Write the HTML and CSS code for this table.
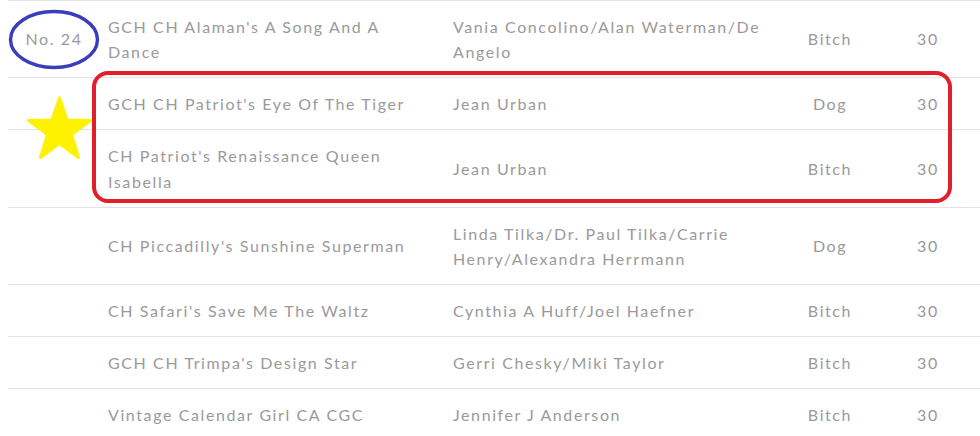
FILE: index.html
```html
<!DOCTYPE html>
<html>
<head>
<meta charset="utf-8">
<link rel="stylesheet" href="styles.css">
</head>
<body>
<div class="page">
  <div class="table">
    <div class="row">
      <div class="cell rank">No. 24</div>
      <div class="cell name">GCH CH Alaman's A Song And A Dance</div>
      <div class="cell owner">Vania Concolino/Alan Waterman/De Angelo</div>
      <div class="cell sex">Bitch</div>
      <div class="cell pts">30</div>
    </div>
    <div class="row">
      <div class="cell rank"></div>
      <div class="cell name">GCH CH Patriot's Eye Of The Tiger</div>
      <div class="cell owner">Jean Urban</div>
      <div class="cell sex">Dog</div>
      <div class="cell pts">30</div>
    </div>
    <div class="row">
      <div class="cell rank"></div>
      <div class="cell name">CH Patriot's Renaissance Queen Isabella</div>
      <div class="cell owner">Jean Urban</div>
      <div class="cell sex">Bitch</div>
      <div class="cell pts">30</div>
    </div>
    <div class="row">
      <div class="cell rank"></div>
      <div class="cell name">CH Piccadilly's Sunshine Superman</div>
      <div class="cell owner">Linda Tilka/Dr. Paul Tilka/Carrie Henry/Alexandra Herrmann</div>
      <div class="cell sex">Dog</div>
      <div class="cell pts">30</div>
    </div>
    <div class="row">
      <div class="cell rank"></div>
      <div class="cell name">CH Safari's Save Me The Waltz</div>
      <div class="cell owner">Cynthia A Huff/Joel Haefner</div>
      <div class="cell sex">Bitch</div>
      <div class="cell pts">30</div>
    </div>
    <div class="row">
      <div class="cell rank"></div>
      <div class="cell name">GCH CH Trimpa's Design Star</div>
      <div class="cell owner">Gerri Chesky/Miki Taylor</div>
      <div class="cell sex">Bitch</div>
      <div class="cell pts">30</div>
    </div>
    <div class="row">
      <div class="cell rank"></div>
      <div class="cell name">Vintage Calendar Girl CA CGC</div>
      <div class="cell owner">Jennifer J Anderson</div>
      <div class="cell sex">Bitch</div>
      <div class="cell pts">30</div>
    </div>
  </div>
  <svg class="marks" width="980" height="436" viewBox="0 0 980 436" aria-hidden="true">
    <ellipse cx="54" cy="39.5" rx="43.5" ry="28" fill="none" stroke="#3a3eba" stroke-width="3.4"/>
    <polygon points="59.5,98 67,120 90.5,120.5 71.5,134.5 78.5,157.5 59.5,143.5 40.5,157.5 47.5,134.5 28.5,120.5 52,120" fill="#fff200" stroke="#fff200" stroke-width="3" stroke-linejoin="round"/>
    <rect x="94" y="73" width="856" height="128" rx="14" ry="14" fill="none" stroke="#e11f2b" stroke-width="4"/>
  </svg>
</div>
</body>
</html>
```

FILE: styles.css
```css
html, body {
  margin: 0;
  padding: 0;
  background: #ffffff;
  overflow: hidden;
}

.page {
  position: relative;
  width: 980px;
  height: 436px;
  overflow: hidden;
}

.table {
  margin-left: 8px;
  width: 990px;
  border-top: 1px solid #e2e2e2;
  font-family: Lato, "Open Sans", sans-serif;
  font-size: 16px;
  line-height: 25.5px;
  letter-spacing: 1.6px;
  color: #9a9a9a;
}

.row {
  display: grid;
  grid-template-columns: 92px 345px 335px 100px 96px;
  align-items: center;
  border-bottom: 1px solid #e2e2e2;
}

.cell {
  padding: 13px 0 12.5px 8px;
}

.row:first-child .cell {
  padding-top: 12.5px;
}

.rank {
  padding-left: 0;
  text-align: center;
}

.name {
  padding-right: 14px;
}

.owner {
  padding-right: 4px;
}

.sex,
.pts {
  padding-left: 0;
  text-align: center;
}

.marks {
  position: absolute;
  left: 0;
  top: 0;
  pointer-events: none;
}
```
